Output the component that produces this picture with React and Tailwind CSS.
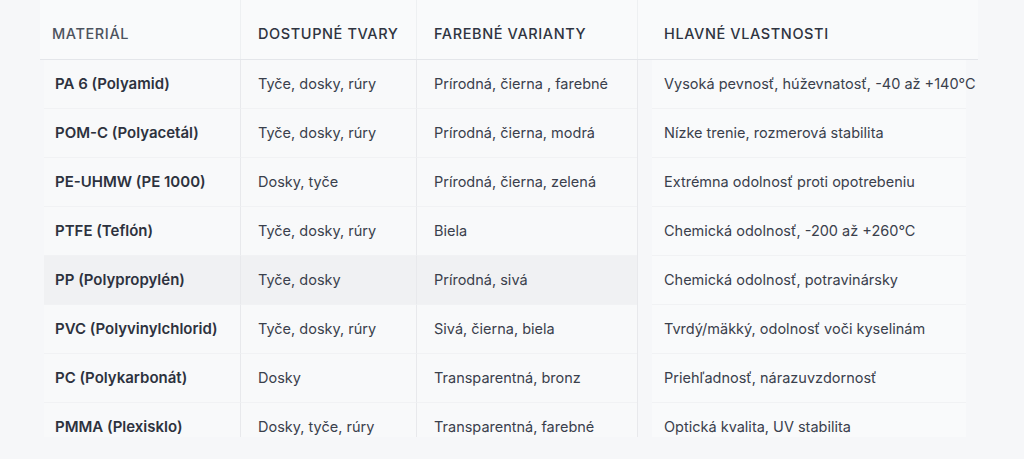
import React from "react";

const rows = [
  ["PA 6 (Polyamid)", "Tyče, dosky, rúry", "Prírodná, čierna , farebné", "Vysoká pevnosť, húževnatosť, -40 až +140°C"],
  ["POM-C (Polyacetál)", "Tyče, dosky, rúry", "Prírodná, čierna, modrá", "Nízke trenie, rozmerová stabilita"],
  ["PE-UHMW (PE 1000)", "Dosky, tyče", "Prírodná, čierna, zelená", "Extrémna odolnosť proti opotrebeniu"],
  ["PTFE (Teflón)", "Tyče, dosky, rúry", "Biela", "Chemická odolnosť, -200 až +260°C"],
  ["PP (Polypropylén)", "Tyče, dosky", "Prírodná, sivá", "Chemická odolnosť, potravinársky"],
  ["PVC (Polyvinylchlorid)", "Tyče, dosky, rúry", "Sivá, čierna, biela", "Tvrdý/mäkký, odolnosť voči kyselinám"],
  ["PC (Polykarbonát)", "Dosky", "Transparentná, bronz", "Priehľadnosť, nárazuvzdornosť"],
  ["PMMA (Plexisklo)", "Dosky, tyče, rúry", "Transparentná, farebné", "Optická kvalita, UV stabilita"],
];

const App = () => {
  return (
    <div
      className="w-[1024px] h-[459px] bg-[#f6f7f9] overflow-hidden"
      style={{ fontFamily: "Inter, 'Noto Sans', sans-serif" }}
    >
      <div className="ml-[40px] w-[938px] h-[437px] overflow-hidden">
        {/* HEADER */}
        <div className="grid grid-cols-[200px_176px_221px_341px] h-[60px] bg-[#f9fafb] border-b border-[#e4e6ea] text-[14.5px] font-medium uppercase tracking-[0.6px] text-[#2f3441]">
          <div className="flex items-center pt-[9px] pl-[12px] text-[#4d535e]">Materiál</div>
          <div className="flex items-center pt-[9px] pl-[17px] border-l border-[#eef0f2]">Dostupné tvary</div>
          <div className="flex items-center pt-[9px] pl-[17px] border-l border-[#eef0f2]">Farebné varianty</div>
          <div className="flex items-center pt-[9px] pl-[26px] border-l border-[#eef0f2]">Hlavné vlastnosti</div>
        </div>

        {/* BODY */}
        {rows.map((r, i) => (
          <div
            key={i}
            className="grid grid-cols-[200px_176px_221px_341px] h-[49px] text-[14.5px] text-[#3a404c]"
          >
            <div className={`flex items-center pl-[11px] ml-[4px] border-b border-[#f1f2f4] text-[15px] font-semibold text-[#2d323e] ${i === 4 ? "bg-[#f0f1f3]" : "bg-[#f8f9fa]"}`}>
              {r[0]}
            </div>
            <div className={`flex items-center pl-[17px] border-l border-[#e8e9ec] border-b border-b-[#f1f2f4] ${i === 4 ? "bg-[#f0f1f3]" : "bg-[#f8f9fa]"}`}>
              {r[1]}
            </div>
            <div className={`flex items-center pl-[17px] border-l border-[#e8e9ec] border-b border-b-[#f1f2f4] ${i === 4 ? "bg-[#f0f1f3]" : "bg-[#f8f9fa]"}`}>
              {r[2]}
            </div>
            <div className="flex items-center pl-[26px] border-l border-[#e8e9ec]">
              <div className="-ml-[12px] pl-[12px] h-full flex items-center w-full bg-[#f9fafb] border-b border-[#f1f2f4] whitespace-nowrap">
                {r[3]}
              </div>
            </div>
          </div>
        ))}
      </div>
    </div>
  );
};

export default App;
